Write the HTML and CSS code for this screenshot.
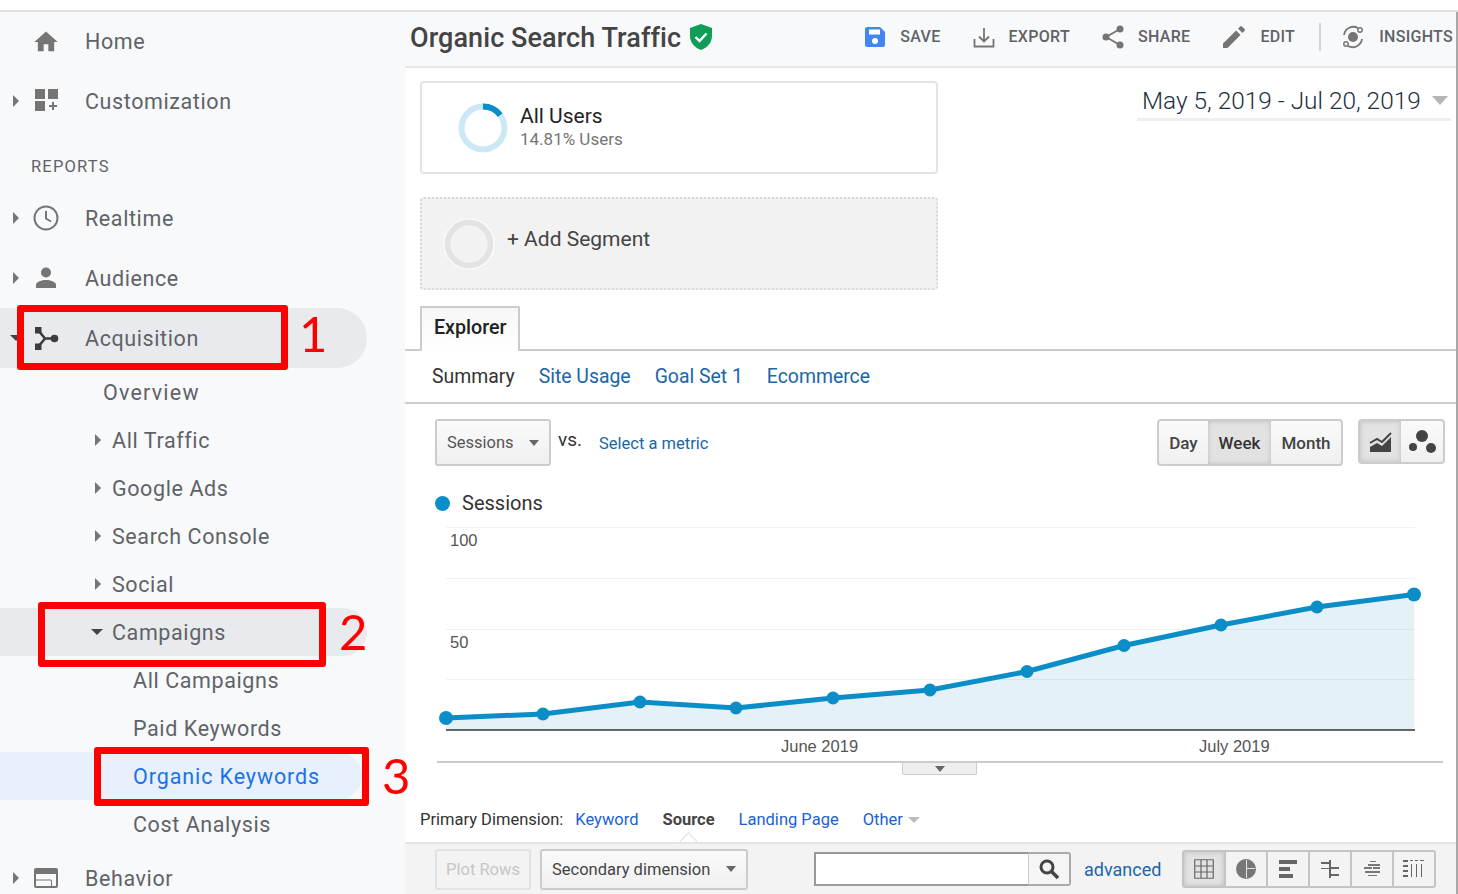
FILE: index.html
```html
<!DOCTYPE html>
<html lang="en">
<head>
<meta charset="UTF-8" />
<title>Organic Search Traffic</title>
<link rel="stylesheet" href="styles.css">
</head>
<body>
  <div id="page">
    <div class="top-strip"></div>
    <div class="layout">

      <!-- Left nav -->
      <nav class="sidebar">
        <div class="nav-row nav-first">
          <span class="caret-slot"></span>
          <svg class="nav-icon" viewBox="0 0 24 24"><path d="M10 20v-6h4v6h5v-8h3L12 3 2 12h3v8z" fill="#757575"/></svg>
          <span class="nav-label">Home</span>
        </div>
        <div class="nav-row">
          <span class="caret-slot"><i class="tri-right"></i></span>
          <svg class="nav-icon" viewBox="0 0 28 28"><path d="M3 2h10v10H3zM16 2h10v10H16zM3 14h10v10H3zM20 15h2v3h3v2h-3v3h-2v-3h-3v-2h3z" fill="#757575"/></svg>
          <span class="nav-label">Customization</span>
        </div>
        <div class="nav-heading">REPORTS</div>
        <div class="nav-row">
          <span class="caret-slot"><i class="tri-right"></i></span>
          <svg class="nav-icon" viewBox="0 0 28 28"><circle cx="14" cy="14" r="11.5" fill="none" stroke="#757575" stroke-width="2"/><path d="M14 7v7.5l5 3" fill="none" stroke="#757575" stroke-width="2"/></svg>
          <span class="nav-label">Realtime</span>
        </div>
        <div class="nav-row">
          <span class="caret-slot"><i class="tri-right"></i></span>
          <svg class="nav-icon" viewBox="0 0 28 28"><circle cx="14" cy="8.5" r="5" fill="#757575"/><path d="M4 24v-3c0-3.500 6-5 10-5s10 1.500 10 5v3z" fill="#757575"/></svg>
          <span class="nav-label">Audience</span>
        </div>
        <div class="nav-row is-open">
          <span class="caret-slot"><i class="tri-down tri-dark"></i></span>
          <svg class="nav-icon" viewBox="0 0 28 28"><path d="M3 3h6.500v6.500H3zM3 19.500h6.500V26H3z" fill="#3c3c3c"/><circle cx="22.500" cy="14.500" r="3.800" fill="#3c3c3c"/><path d="M6 6l7 8.500-7 8.500M13 14.500h9" fill="none" stroke="#3c3c3c" stroke-width="2.600"/></svg>
          <span class="nav-label">Acquisition</span>
        </div>
        <div class="sub-row sub-plain">Overview</div>
        <div class="sub-row"><i class="tri-right"></i><span>All Traffic</span></div>
        <div class="sub-row"><i class="tri-right"></i><span>Google Ads</span></div>
        <div class="sub-row"><i class="tri-right"></i><span>Search Console</span></div>
        <div class="sub-row"><i class="tri-right"></i><span>Social</span></div>
        <div class="sub-row is-open"><i class="tri-down tri-dark"></i><span>Campaigns</span></div>
        <div class="sub-row sub-deep">All Campaigns</div>
        <div class="sub-row sub-deep">Paid Keywords</div>
        <div class="sub-row sub-deep is-active">Organic Keywords</div>
        <div class="sub-row sub-deep">Cost Analysis</div>
        <div class="nav-row">
          <span class="caret-slot"><i class="tri-right"></i></span>
          <svg class="nav-icon" viewBox="0 0 28 28"><rect x="2" y="4" width="24" height="20" rx="2" fill="#757575"/><path d="M4 10h20v12h-4V16h-1v6H4z" fill="#f8f9fa"/><path d="M4 15.500h15v1H4z" fill="#757575"/></svg>
          <span class="nav-label">Behavior</span>
        </div>
      </nav>

      <main class="content">
        <!-- Title bar -->
        <header class="title-bar">
          <h1>Organic Search Traffic</h1>
          <svg class="shield" viewBox="0 0 22 26"><path d="M11 0l11 4v8c0 6.500-4.500 11.500-11 14C4.500 23.500 0 18.500 0 12V4z" fill="#0f9d58"/><path d="M5.500 13l4 4 7-7.500" fill="none" stroke="#fff" stroke-width="2.400"/></svg>
          <div class="actions">
            <div class="action">
              <svg width="22" height="22" viewBox="0 0 22 22"><path d="M3 1h13l5 5v13a2 2 0 01-2 2H3a2 2 0 01-2-2V3a2 2 0 012-2z" fill="#4285f4"/><rect x="5" y="3.500" width="11" height="5" fill="#fff"/><circle cx="11" cy="15" r="3" fill="#fff"/></svg>
              <span>SAVE</span>
            </div>
            <div class="action">
              <svg width="22" height="22" viewBox="0 0 22 22"><path d="M1.500 13v7.500h19V13" fill="none" stroke="#757575" stroke-width="1.800"/><path d="M11 2v13M6 10.500l5 5 5-5" fill="none" stroke="#757575" stroke-width="1.800"/></svg>
              <span>EXPORT</span>
            </div>
            <div class="action">
              <svg width="22" height="24" viewBox="0 0 22 24"><circle cx="18" cy="4" r="3.500" fill="#757575"/><circle cx="4" cy="12" r="3.500" fill="#757575"/><circle cx="18" cy="20" r="3.500" fill="#757575"/><path d="M18 4L4 12l14 8" fill="none" stroke="#757575" stroke-width="1.800"/></svg>
              <span>SHARE</span>
            </div>
            <div class="action">
              <svg width="24" height="24" viewBox="0 0 24 24"><path d="M1 18.500V23h4.500L18.500 9.900 14.100 5.500zM22.600 5.800a1.200 1.200 0 000-1.700l-2.700-2.700a1.200 1.200 0 00-1.700 0l-2.200 2.200 4.400 4.400z" fill="#757575"/></svg>
              <span>EDIT</span>
            </div>
            <div class="action-sep"></div>
            <div class="action">
              <svg width="24" height="24" viewBox="0 0 24 24"><circle cx="12" cy="12" r="5" fill="#757575"/><path d="M3 10a9.500 9.500 0 0114-7M21 14a9.500 9.500 0 01-14 7" fill="none" stroke="#757575" stroke-width="1.800"/><circle cx="19" cy="5" r="2.200" fill="none" stroke="#757575" stroke-width="1.500"/><circle cx="5" cy="19" r="2.200" fill="none" stroke="#757575" stroke-width="1.500"/></svg>
              <span>INSIGHTS</span>
            </div>
          </div>
        </header>

        <!-- Segments + date -->
        <section class="segments-row">
          <div class="segments">
            <div class="seg-card">
              <svg class="seg-donut" width="52" height="52" viewBox="0 0 52 52">
                <circle cx="26" cy="26" r="21.500" fill="none" stroke="#cde8f5" stroke-width="6"/>
                <path d="M26 4.500A21.500 21.500 0 0143.200 13.100" fill="none" stroke="#0b8dc8" stroke-width="6"/>
              </svg>
              <div class="seg-text">
                <div class="seg-name">All Users</div>
                <div class="seg-sub">14.81% Users</div>
              </div>
            </div>
            <div class="seg-card seg-add">
              <svg width="52" height="52" viewBox="0 0 52 52">
                <circle cx="26" cy="26" r="25.500" fill="#fff"/>
                <circle cx="26" cy="26" r="21" fill="#f2f2f2" stroke="#e3e3e3" stroke-width="7"/>
                <circle cx="26" cy="26" r="18" fill="none" stroke="#fafafa" stroke-width="1"/>
              </svg>
              <span class="seg-add-label">+ Add Segment</span>
            </div>
          </div>
          <div class="date-range">
            <span>May 5, 2019 - Jul 20, 2019</span>
            <i class="date-caret"></i>
          </div>
        </section>

        <!-- Tabs -->
        <div class="tab-strip">
          <div class="tab">Explorer</div>
        </div>
        <div class="sub-tabs">
          <span class="sub-tab-current">Summary</span>
          <a>Site Usage</a>
          <a>Goal Set 1</a>
          <a>Ecommerce</a>
        </div>

        <!-- Chart controls -->
        <div class="chart-controls">
          <div class="select-btn metric-select"><span>Sessions</span><i class="tri-down tri-grey"></i></div>
          <span class="vs">VS.</span>
          <a class="metric-link">Select a metric</a>
          <div class="btn-group period-group">
            <div class="period">Day</div>
            <div class="period is-on">Week</div>
            <div class="period">Month</div>
          </div>
          <div class="btn-group type-group">
            <div class="type-btn is-on">
              <svg width="24" height="24" viewBox="0 0 24 24"><path d="M1 22v-5l7-4 5 3 9-9v15z" fill="#444"/><path d="M1 13l7-4 5 3 9-9" fill="none" stroke="#444" stroke-width="2"/></svg>
            </div>
            <div class="type-btn">
              <svg width="30" height="28" viewBox="0 0 30 28"><circle cx="15" cy="8" r="6" fill="#444"/><circle cx="6" cy="19" r="4" fill="#444"/><circle cx="24" cy="20" r="5" fill="#444"/></svg>
            </div>
          </div>
        </div>

        <div class="legend"><i class="legend-dot"></i><span>Sessions</span></div>

        <svg class="chart" viewBox="405 520 1052 243" width="1052" height="243">
          <polygon fill="#e4f1f7" points="446,730 446,718 543,714 640,702 736,708 833,698 930,690 1027,671.500 1124,645.500 1221,625 1317,607 1414,594.500 1414,730"/>
          <g stroke="#000" stroke-opacity=".05" stroke-width="1">
            <path d="M446 527.500H1415M446 578.500H1415M446 629.500H1415M446 679.500H1415"/>
          </g>
          <path d="M446 730H1415" stroke="#333" stroke-width="1.500"/>
          <polyline fill="none" stroke="#0b8dc8" stroke-width="5" points="446,718 543,714 640,702 736,708 833,698 930,690 1027,671.500 1124,645.500 1221,625 1317,607 1414,594.500"/>
          <g fill="#0b8dc8">
            <circle cx="446" cy="718" r="7"/><circle cx="543" cy="714" r="6.500"/><circle cx="640" cy="702" r="6.500"/><circle cx="736" cy="708" r="6.500"/><circle cx="833" cy="698" r="6.500"/><circle cx="930" cy="690" r="6.500"/><circle cx="1027" cy="671.500" r="6.500"/><circle cx="1124" cy="645.500" r="6.500"/><circle cx="1221" cy="625" r="6.500"/><circle cx="1317" cy="607" r="6.500"/><circle cx="1414" cy="594.500" r="7"/>
          </g>
          <g class="chart-text">
            <text x="450" y="546">100</text>
            <text x="450" y="648">50</text>
            <text x="781" y="752">June 2019</text>
            <text x="1199" y="752">July 2019</text>
          </g>
          <path d="M437 762H1443" stroke="#ccc" stroke-width="2"/>
        </svg>
        <div class="chart-handle"><i class="tri-down tri-grey"></i></div>

        <!-- Primary dimension -->
        <div class="dimension-row">
          <span class="dim-label">Primary Dimension:</span>
          <a>Keyword</a>
          <b class="dim-current">Source</b>
          <a>Landing Page</a>
          <a>Other</a><i class="other-caret"></i>
        </div>

        <!-- Table toolbar -->
        <div class="table-bar">
          <div class="plot-btn">Plot Rows</div>
          <div class="select-btn secondary-select"><span>Secondary dimension</span><i class="tri-down tri-grey"></i></div>
          <div class="search-box">
            <div class="search-input"></div>
            <div class="search-btn">
              <svg width="22" height="22" viewBox="0 0 22 22"><circle cx="9" cy="9" r="6" fill="none" stroke="#444" stroke-width="3"/><path d="M13.500 13.500L20 20" stroke="#444" stroke-width="3.500"/></svg>
            </div>
          </div>
          <a class="advanced">advanced</a>
          <div class="view-group">
            <div class="view-btn is-on">
              <svg width="20" height="20" viewBox="0 0 20 20"><path d="M.75.75h18.500v18.500H.75zM7 .75v18.500M13 .75v18.500M.75 7h18.500M.75 13h18.500" fill="none" stroke="#666" stroke-width="1.200"/></svg>
            </div>
            <div class="view-btn">
              <svg width="20" height="20" viewBox="0 0 20 20"><circle cx="10" cy="10" r="10" fill="#777"/><path d="M10.500 1v8.500H19M10.500 9.500V19" fill="none" stroke="#e4e4e4" stroke-width="1"/></svg>
            </div>
            <div class="view-btn">
              <svg width="20" height="20" viewBox="0 0 20 20"><path d="M1 1h18v4H1zM1 8h11v4H1zM1 15h14v4H1z" fill="#666"/></svg>
            </div>
            <div class="view-btn">
              <svg width="20" height="20" viewBox="0 0 20 20"><path d="M1 3h9v2H1zM9 8h10v2H9zM1 9h8v1H1zM9 15h10v2H9z" fill="#666"/><path d="M9 1h2v18H9z" fill="#666"/></svg>
            </div>
            <div class="view-btn">
              <svg width="20" height="20" viewBox="0 0 20 20"><path d="M8 2h6v1H8zM6 5h12v2H6zM2 8h8v2H2zM11 8h7v2h-7zM3 12h15v2H3zM6 16h9v1H6z" fill="#777"/></svg>
            </div>
            <div class="view-btn">
              <svg width="24" height="20" viewBox="0 0 24 20"><path d="M1 1h5v2H1zM1 6h5v2H1zM1 11h5v2H1zM1 16h5v2H1zM8 1h3v1H8zM13 1h3v1h-3zM18 1h4v1h-4zM9 5h1v13H9zM14 5h1v13h-1zM19 5h1v13h-1z" fill="#666"/></svg>
            </div>
          </div>
        </div>
      </main>
    </div>

    <!-- Red annotations drawn over the screenshot -->
    <div class="mark mark-1"></div>
    <div class="mark mark-2"></div>
    <div class="mark mark-3"></div>
    <div class="mark-num num-1">1</div>
    <div class="mark-num num-2">2</div>
    <div class="mark-num num-3">3</div>
  </div>
</body>
</html>
```

FILE: styles.css
```css
html, body {
  margin: 0;
  height: 894px;
  overflow: hidden;
  background: #fff;
}
#page {
  position: relative;
  width: 1458px;
  height: 894px;
  overflow: hidden;
  font-family: Roboto, "Liberation Sans", sans-serif;
}
a { color: #1a66a8; }

.top-strip {
  height: 10px;
  background: #fff;
  border-bottom: 2px solid #dfe1e3;
}
.layout {
  display: flex;
  height: 882px;
}

/* Triangles */
.tri-right {
  display: block;
  width: 0;
  height: 0;
  border-left: 6px solid #757575;
  border-top: 6px solid transparent;
  border-bottom: 6px solid transparent;
}
.tri-down {
  display: block;
  width: 0;
  height: 0;
  border-top: 6px solid #757575;
  border-left: 6px solid transparent;
  border-right: 6px solid transparent;
}
.tri-dark { border-top-color: #444; }
.tri-grey { border-top-color: #666; border-top-width: 6px; border-left-width: 5px; border-right-width: 5px; }

/* Sidebar */
.sidebar {
  width: 405px;
  flex: none;
  background: #f8f9fa;
  color: #5f6368;
  font-size: 21.5px;
  letter-spacing: .6px;
}
.nav-row {
  display: flex;
  align-items: center;
  height: 60px;
  margin-right: 38px;
}
.nav-first { height: 59px; }
.caret-slot {
  width: 32px;
  display: flex;
  padding-left: 13px;
  box-sizing: border-box;
}
.nav-icon {
  width: 28px;
  height: 28px;
  margin-right: 25px;
}
.nav-row.is-open, .sub-row.is-open {
  background: #e8eaed;
  border-radius: 0 30px 30px 0;
}
.nav-row.is-open .caret-slot { padding-left: 10px; }
.nav-heading {
  height: 57px;
  padding: 26px 0 0 31px;
  box-sizing: border-box;
  font-size: 16.5px;
  line-height: 20px;
  letter-spacing: 1.200px;
}
.sub-row {
  display: flex;
  align-items: center;
  height: 48px;
  margin-right: 38px;
  padding-left: 95px;
  box-sizing: border-box;
}
.sub-row .tri-right {
  margin-right: 11px;
}
.sub-row.is-open {
  padding-left: 91px;
  border-radius: 0 24px 24px 0;
}
.sub-row.is-open .tri-down { margin-right: 9px; }
.sub-plain { padding-left: 103px; letter-spacing: 1.200px; }
.sub-deep { padding-left: 133px; }
.sub-row.is-active {
  background: #e8f0fe;
  color: #1a73e8;
  margin-right: 43px;
  border-radius: 0 24px 24px 0;
  letter-spacing: .9px;
}

/* Main column */
.content {
  width: 1051px;
  flex: none;
  border-right: 2px solid #a8a8a8;
  min-width: 0;
}
.title-bar {
  display: flex;
  align-items: center;
  height: 52px;
  padding: 0 3px 2px 5px;
  background: #f8f9fa;
  border-bottom: 2px solid #e6e7e8;
  box-sizing: content-box;
}
.title-bar h1 {
  margin: 0 0 1px;
  font-size: 27px;
  font-weight: 500;
  color: #444;
  letter-spacing: .08px;
}
.shield {
  width: 22px;
  height: 26px;
  margin: 0 0 3px 9px;
}
.actions {
  display: flex;
  align-items: center;
  margin-left: auto;
  margin-bottom: 3px;
  font-size: 16px;
  font-weight: 500;
  letter-spacing: .3px;
  color: #5f6368;
  white-space: nowrap;
}
.action {
  display: flex;
  align-items: center;
  gap: 14px;
  margin-left: 32px;
}
.action-sep {
  width: 2px;
  height: 28px;
  background: #d5d6d8;
  margin-left: 24px;
  margin-right: -12px;
}

.segments-row {
  display: flex;
  padding: 13px 5px 0 15px;
}
.segments {
  width: 518px;
  display: flex;
  flex-direction: column;
  gap: 23px;
}
.seg-card {
  display: flex;
  align-items: center;
  height: 93px;
  box-sizing: border-box;
  padding-left: 35px;
  background: #fff;
  border: 2px solid #e4e4e4;
  border-radius: 4px;
  gap: 11px;
}
.seg-text { margin-top: -2px; }
.seg-name {
  font-size: 21px;
  color: #222;
  line-height: 24px;
}
.seg-sub {
  font-size: 17px;
  color: #757575;
  line-height: 22px;
}
.seg-add {
  background: #f2f2f2;
  border: 2px dotted #d8d8d8;
  padding-left: 21px;
  gap: 12px;
}
.seg-add-label {
  font-size: 21px;
  color: #444;
  margin-top: -9px;
}
.date-range {
  margin-left: auto;
  width: 314px;
  height: 40px;
  box-sizing: border-box;
  padding: 2px 0 0 5px;
  display: flex;
  align-items: center;
  border-bottom: 3px solid #eee;
  font-size: 24.400px;
  font-weight: 300;
  color: #1c2f40;
  white-space: nowrap;
}
.date-caret {
  display: block;
  margin-left: 11px;
  border-top: 9px solid #b5b5b5;
  border-left: 8px solid transparent;
  border-right: 8px solid transparent;
}

.tab-strip {
  height: 45px;
  margin-top: 16px;
  padding-left: 15px;
  border-bottom: 2px solid #ccc;
  box-sizing: border-box;
}
.tab {
  width: 100px;
  height: 45px;
  box-sizing: border-box;
  border: 2px solid #ccc;
  border-bottom: 0;
  border-radius: 2px 2px 0 0;
  background: linear-gradient(#f7f7f7, #fff);
  padding-left: 12px;
  font-size: 19.700px;
  font-weight: 500;
  line-height: 40px;
  color: #222;
}
.sub-tabs {
  display: flex;
  align-items: center;
  height: 51px;
  padding-left: 27px;
  gap: 24px;
  font-size: 19.400px;
  border-bottom: 2px solid #ccc;
  box-sizing: content-box;
}
.sub-tab-current { color: #333; }

.chart-controls {
  display: flex;
  align-items: flex-start;
  height: 47px;
  padding: 15px 0 0 30px;
}
.select-btn {
  display: flex;
  align-items: center;
  justify-content: space-between;
  box-sizing: border-box;
  border: 2px solid #ccc;
  border-radius: 3px;
  background: linear-gradient(#fafafa, #f0f0f0);
  color: #555;
}
.metric-select {
  width: 116px;
  height: 47px;
  padding: 0 10px;
  font-size: 16.500px;
}
.vs {
  margin: 9px 0 0 7px;
  font-size: 19px;
  color: #333;
  text-transform: lowercase;
}
.metric-link {
  margin: 15px 0 0 17px;
  font-size: 16.500px;
}
.btn-group {
  display: flex;
  box-sizing: border-box;
  border: 2px solid #ccc;
  border-radius: 4px;
  background: linear-gradient(#fafafa, #f0f0f0);
  overflow: hidden;
}
.period-group {
  margin-left: auto;
  height: 47px;
}
.period {
  display: flex;
  align-items: center;
  justify-content: center;
  font-size: 17px;
  font-weight: 500;
  color: #444;
  padding: 0 10.500px;
}
.period.is-on, .type-btn.is-on, .view-btn.is-on {
  background: #e2e2e2;
  box-shadow: inset 0 0 5px #bbb;
  color: #333;
}
.type-group {
  margin: 0 11px 0 15px;
  height: 45px;
}
.type-btn {
  display: flex;
  align-items: center;
  justify-content: center;
  width: 41px;
}
.type-btn + .type-btn { width: 42px; }

.legend {
  display: flex;
  align-items: center;
  height: 30px;
  margin-top: 22px;
  padding-left: 30px;
  font-size: 20px;
  color: #333;
  gap: 12px;
}
.legend-dot {
  width: 15px;
  height: 15px;
  border-radius: 50%;
  background: #0b8dc8;
}
.chart {
  display: block;
  margin-top: 2px;
}
.chart-text {
  font-family: "Liberation Sans", Arial, sans-serif;
  font-size: 16.500px;
  fill: #555;
}
.chart-handle {
  display: flex;
  align-items: center;
  justify-content: center;
  width: 75px;
  height: 12px;
  margin-left: 497px;
  box-sizing: border-box;
  border: 1px solid #ccc;
  border-top: 0;
  border-radius: 0 0 2px 2px;
  background: #eee;
}
.dimension-row {
  display: flex;
  align-items: center;
  height: 67px;
  padding: 22px 0 0 15px;
  font-size: 16.500px;
  box-sizing: border-box;
  white-space: nowrap;
}
.dimension-row a {
  color: #1a62d6;
  margin-left: 24px;
}
.dim-label { color: #333; }
.dimension-row .dim-label + a { margin-left: 12px; }
.dim-current {
  position: relative;
  margin-left: 24px;
  font-weight: 700;
  color: #444;
}
/* little notch under the selected dimension */
.dim-current::after {
  content: "";
  position: absolute;
  left: 20px;
  bottom: -19px;
  width: 12px;
  height: 12px;
  background: #fff;
  border-top: 1px solid #e0e0e0;
  border-left: 1px solid #e0e0e0;
  transform: rotate(45deg);
}
.other-caret {
  display: block;
  margin-left: 5px;
  border-top: 6px solid #bbb;
  border-left: 6px solid transparent;
  border-right: 6px solid transparent;
}

.table-bar {
  position: relative;
  display: flex;
  align-items: center;
  height: 52px;
  padding-left: 30px;
  background: #f3f3f3;
  border-top: 2px solid #e4e4e4;
  box-sizing: border-box;
}
.plot-btn {
  width: 96px;
  height: 41px;
  box-sizing: border-box;
  border: 2px solid #e2e2e2;
  border-radius: 3px;
  font-size: 16.500px;
  line-height: 37px;
  text-align: center;
  color: #c6c6c6;
}
.secondary-select {
  width: 208px;
  height: 41px;
  margin-left: 9px;
  padding: 0 10px;
  font-size: 16.500px;
  color: #444;
}
.search-box {
  display: flex;
  margin-left: 66px;
  height: 34px;
}
.search-input {
  width: 215px;
  box-sizing: border-box;
  background: #fff;
  border: 2px solid #999;
  border-right: 1px solid #ccc;
}
.search-btn {
  display: flex;
  align-items: center;
  justify-content: center;
  width: 42px;
  box-sizing: border-box;
  border: 2px solid #aaa;
  border-left: 0;
  border-radius: 0 3px 3px 0;
  background: #f5f5f5;
}
.advanced {
  margin-left: 13px;
  font-size: 18px;
}
.view-group {
  display: flex;
  width: 254px;
  height: 38px;
  margin-left: 21px;
  box-sizing: border-box;
  border: 2px solid #c4c4c4;
  border-radius: 3px;
  overflow: hidden;
}
.view-btn {
  display: flex;
  flex: 1;
  align-items: center;
  justify-content: center;
  border-left: 2px solid #c4c4c4;
}
.view-btn:first-child { border-left: 0; }

/* Red annotation boxes */
.mark {
  position: absolute;
  box-sizing: border-box;
  border: 7px solid #ff0000;
  border-radius: 3px;
}
.mark-1 { left: 17px; top: 305px; width: 271px; height: 65px; }
.mark-2 { left: 38px; top: 602px; width: 288px; height: 65px; }
.mark-3 { left: 94px; top: 747px; width: 275px; height: 59px; }
.mark-num {
  position: absolute;
  font-family: Lato, sans-serif;
  font-size: 49px;
  line-height: 50px;
  color: #ff0000;
}
.num-1 { left: 299px; top: 308px; }
.num-2 { left: 339px; top: 606px; }
.num-3 { left: 382px; top: 750px; }
```
